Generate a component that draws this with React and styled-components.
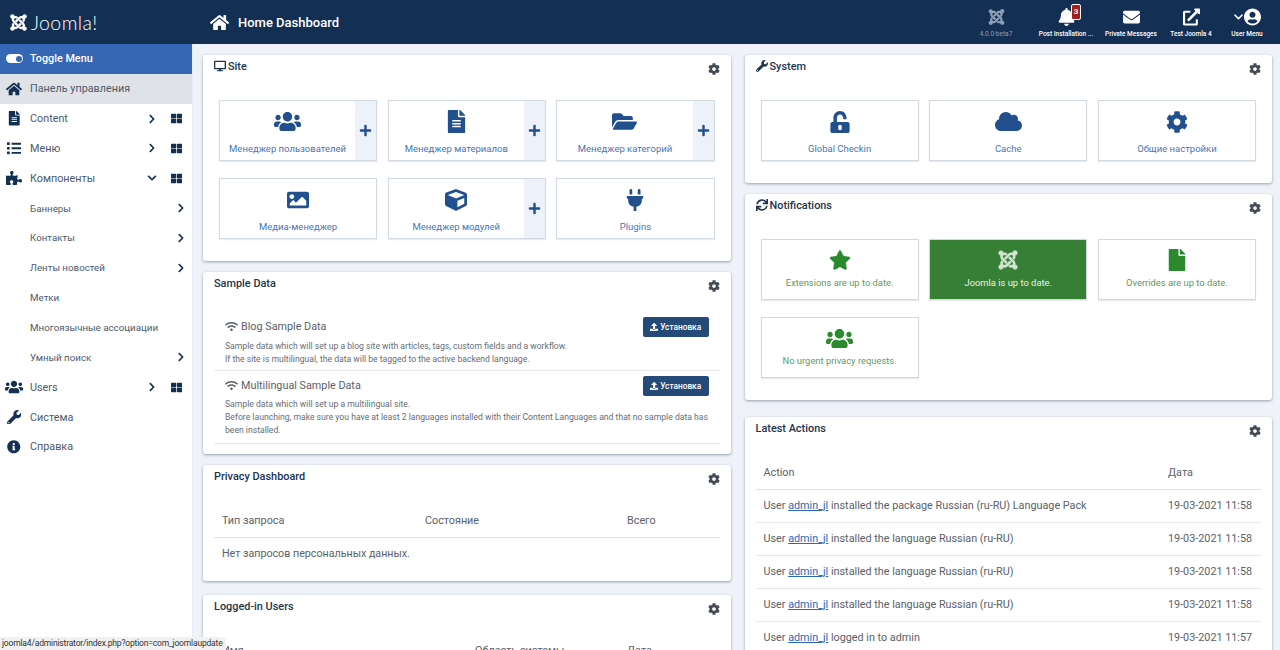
import styled, { createGlobalStyle } from "styled-components";
import {
  FaHome, FaFileAlt, FaList, FaPuzzlePiece, FaUsers, FaWrench, FaInfoCircle, FaChevronRight,
  FaChevronDown, FaThLarge, FaDesktop, FaCog, FaPlus, FaFolderOpen, FaImage, FaCube, FaPlug,
  FaUnlockAlt, FaCloud, FaStar, FaFile, FaSync, FaWifi, FaUpload, FaBell, FaEnvelope,
  FaExternalLinkAlt, FaUserCircle, FaJoomla,
} from "react-icons/fa";

const GlobalStyle = createGlobalStyle`
  html, body { margin: 0; height: 650px; overflow: hidden; }
  body { font-family: Roboto, "Liberation Sans", sans-serif; background: #eff3f9; color: #495057; }
  * { box-sizing: border-box; }
`;

const Page = styled.div`
  position: relative;
  height: 650px;
  overflow: hidden;
`;

const Header = styled.header`
  height: 44px;
  background: #132f53;
  color: #fff;
  display: flex;
  align-items: center;
`;
const Logo = styled.div`
  width: 192px;
  padding-left: 9px;
  display: flex;
  align-items: center;
  gap: 3px;
  font-family: Lato, sans-serif;
  font-weight: 300;
  font-size: 19.5px;
  letter-spacing: 0.4px;
  svg { font-size: 19px; }
`;
const PageTitle = styled.div`
  display: flex;
  align-items: center;
  gap: 9px;
  padding-left: 18px;
  font-size: 13px;
  font-weight: 500;
  svg { font-size: 19px; }
`;
const HeaderTools = styled.div`
  margin-left: auto;
  display: flex;
  align-items: flex-start;
  padding: 1px 11px 0 0;
`;
const Tool = styled.div`
  position: relative;
  width: ${(p) => p.$w}px;
  display: flex;
  flex-direction: column;
  align-items: center;
  gap: 4px;
  font-size: 6.5px;
  font-weight: ${(p) => (p.$dim ? 400 : 500)};
  white-space: nowrap;
  color: ${(p) => (p.$dim ? "#8d9eb5" : "#fff")};
  svg { font-size: 17px; height: 18px; }
`;
const Badge = styled.span`
  position: absolute;
  top: -4px;
  left: 50%;
  margin-left: 5px;
  width: 10px;
  height: 16px;
  background: #a51f18;
  border: 1px solid #fff;
  border-radius: 2px;
  font-size: 8px;
  font-weight: 700;
  line-height: 14px;
  text-align: center;
`;
const UserIcons = styled.div`
  display: flex;
  align-items: center;
  gap: 1px;
  svg:first-child { font-size: 9px; }
`;

const Body = styled.div`
  display: flex;
  height: 606px;
`;
const Sidebar = styled.nav`
  width: 193px;
  flex: none;
  background: #fff;
  border-right: 1px solid #e6ebf2;
`;
const MenuItem = styled.div`
  height: 29.85px;
  display: flex;
  align-items: center;
  padding-left: ${(p) => (p.$sub ? 30 : 6)}px;
  font-size: ${(p) => (p.$sub ? 9.75 : 10.8)}px;
  color: ${(p) => (p.$active ? "#fff" : "#4d5a6b")};
  background: ${(p) => (p.$active ? "#3567b5" : p.$current ? "#dfe3e7" : "transparent")};
  font-weight: ${(p) => (p.$active ? 500 : 400)};
`;
const MenuIcon = styled.span`
  width: 16px;
  margin-right: 8px;
  display: flex;
  justify-content: center;
  color: #132f53;
  font-size: ${(p) => p.$size ?? 14.5}px;
  svg { flex: none; }
`;
const Toggle = styled.span`
  width: 17px;
  height: 9px;
  margin: 0 7px 0 0;
  background: #fff;
  border-radius: 5px;
  display: flex;
  justify-content: flex-end;
  align-items: center;
  padding-right: 1.5px;
  &::after {
    content: "";
    width: 6px;
    height: 6px;
    border-radius: 50%;
    background: #3567b5;
  }
`;
const MenuText = styled.span`
  flex: 1;
  white-space: nowrap;
`;
const MenuArrow = styled.span`
  width: 12px;
  margin-right: ${(p) => (p.$sub ? 5 : 13)}px;
  display: flex;
  justify-content: center;
  color: #132f53;
  font-size: 10px;
`;
const MenuGrid = styled.span`
  width: 11px;
  margin-right: 10px;
  display: flex;
  color: #132f53;
  font-size: 11px;
`;

const Content = styled.main`
  flex: 1;
  display: flex;
  gap: 14px;
  padding: 11px 8px 0 10px;
  overflow: hidden;
`;
const Column = styled.div`
  flex: 1;
  min-width: 0;
  display: flex;
  flex-direction: column;
`;
const Card = styled.section`
  position: relative;
  flex: none;
  background: #fff;
  border-radius: 3px;
  box-shadow: 0 1px 3px rgba(40, 55, 80, 0.45);
  margin-bottom: ${(p) => p.$mb ?? 11}px;
  height: ${(p) => p.$h}px;
  padding: 0 16px;
`;
const CardHead = styled.h2`
  margin: 0 0 0 -5px;
  height: 45px;
  padding-top: 4px;
  display: flex;
  align-items: flex-start;
  gap: 2px;
  font-size: 10.9px;
  line-height: 15px;
  font-weight: 500;
  color: #22334d;
  svg { font-size: 12px; margin-top: 1px; }
`;
const CardGear = styled.span`
  position: absolute;
  top: 8px;
  right: 11px;
  font-size: 12px;
  color: #454c55;
  display: flex;
`;
const TileGrid = styled.div`
  display: grid;
  grid-template-columns: repeat(3, 1fr);
  gap: 17px 10.5px;
`;
const Tile = styled.div`
  height: 61px;
  display: flex;
  border: 1px solid #d3d9e2;
  box-shadow: 0 1px 1px rgba(210, 217, 227, 0.5);
  background: ${(p) => (p.$solid ? "#387f36" : "#fff")};
  color: ${(p) => (p.$solid ? "#e8f2e7" : p.$green ? "#619a60" : "#4a75b4")};
`;
const TileMain = styled.div`
  flex: 1;
  min-width: 0;
  display: flex;
  flex-direction: column;
  align-items: center;
  padding-top: 8px;
  font-size: ${(p) => (p.$green ? 9.4 : 9.5)}px;
  white-space: nowrap;
`;
const TileIcon = styled.span`
  height: ${(p) => (p.$tight ? 24 : 25)}px;
  margin-bottom: ${(p) => (p.$tight ? 5 : 9)}px;
  display: flex;
  align-items: center;
  font-size: ${(p) => p.$size ?? 22}px;
  color: ${(p) => (p.$solid ? "#cfe3ce" : p.$green ? "#2b8a2e" : "#22508f")};
`;
const TileAdd = styled.span`
  width: 21px;
  flex: none;
  background: #edf2fa;
  display: flex;
  align-items: center;
  justify-content: center;
  color: #22508f;
  font-size: 13px;
`;

const SampleList = styled.div`
  margin: -1px -5px 0;
`;
const SampleRow = styled.div`
  position: relative;
  padding: ${(p) => p.$pt}px 10px 0 11px;
  height: ${(p) => p.$h}px;
  border-bottom: 1px solid #e4e7ec;
`;
const SampleTitle = styled.div`
  display: flex;
  align-items: center;
  gap: 3px;
  font-size: 10.8px;
  line-height: 15px;
  color: #5a6169;
  margin-bottom: ${(p) => p.$mb}px;
  svg { font-size: 13px; }
`;
const SampleText = styled.p`
  margin: 0;
  font-size: 8.62px;
  line-height: 13px;
  color: #666d75;
`;
const InstallButton = styled.span`
  position: absolute;
  top: ${(p) => p.$top}px;
  right: 11px;
  width: 66px;
  height: 20px;
  background: #254a78;
  border-radius: 2px;
  color: #fff;
  display: flex;
  align-items: center;
  justify-content: center;
  gap: 2px;
  font-size: 8.3px;
  font-weight: 500;
`;

const DataTable = styled.table`
  width: calc(100% + 10px);
  margin: 0 -5px;
  border-collapse: collapse;
  font-size: 10.8px;
  color: #5a6169;
  table-layout: fixed;
  td { padding: 0 0 0 8px; white-space: nowrap; }
`;
const HeadRow = styled.tr`
  height: ${(p) => p.$h}px;
  border-bottom: ${(p) => (p.$line ? "1px solid #dee2e6" : "none")};
`;
const HeadCell = styled.th`
  width: ${(p) => (p.$w ? `${p.$w}px` : "auto")};
  padding: 0 0 6px 8px;
  font-weight: 400;
  text-align: left;
`;
const LogRow = styled.tr`
  height: 33px;
  border-bottom: 1px solid #e6e9ee;
`;
const NameLink = styled.a`
  color: #2a69b8;
  text-decoration: underline;
`;
const EmptyNote = styled.div`
  padding: 9px 3px;
  font-size: 10.7px;
  color: #5a6169;
`;

const StatusBar = styled.div`
  position: absolute;
  left: 0;
  bottom: 0;
  height: 13px;
  width: 226px;
  padding-left: 2px;
  background: #f1f1f1;
  border-top-right-radius: 3px;
  font-size: 8.5px;
  letter-spacing: -0.18px;
  line-height: 13px;
  color: #333;
  white-space: nowrap;
`;

const menu = [
  { icon: <FaFileAlt />, label: "Content", arrow: "right", grid: true },
  { icon: <FaList />, label: "Меню", arrow: "right", grid: true },
  { icon: <FaPuzzlePiece />, size: 16, label: "Компоненты", arrow: "down", grid: true },
  { sub: true, label: "Баннеры", arrow: "right" },
  { sub: true, label: "Контакты", arrow: "right" },
  { sub: true, label: "Ленты новостей", arrow: "right" },
  { sub: true, label: "Метки" },
  { sub: true, label: "Многоязычные ассоциации" },
  { sub: true, label: "Умный поиск", arrow: "right" },
  { icon: <FaUsers />, size: 18, label: "Users", arrow: "right", grid: true },
  { icon: <FaWrench />, label: "Система" },
  { icon: <FaInfoCircle />, size: 13.5, label: "Справка" },
];

const siteTiles = [
  { icon: <FaUsers />, size: 27, label: "Менеджер пользователей", add: true },
  { icon: <FaFileAlt />, size: 23, label: "Менеджер материалов", add: true },
  { icon: <FaFolderOpen />, size: 25, label: "Менеджер категорий", add: true },
  { icon: <FaImage />, label: "Медиа-менеджер" },
  { icon: <FaCube />, label: "Менеджер модулей", add: true },
  { icon: <FaPlug />, label: "Plugins" },
];

const systemTiles = [
  { icon: <FaUnlockAlt />, label: "Global Checkin" },
  { icon: <FaCloud />, size: 27, label: "Cache" },
  { icon: <FaCog />, label: "Общие настройки" },
];

const noticeTiles = [
  { icon: <FaStar />, label: "Extensions are up to date." },
  { icon: <FaJoomla />, label: "Joomla is up to date.", solid: true },
  { icon: <FaFile />, label: "Overrides are up to date." },
  { icon: <FaUsers />, size: 27, label: "No urgent privacy requests." },
];

const logRows = [
  { text: "installed the package Russian (ru-RU) Language Pack", date: "19-03-2021 11:58" },
  { text: "installed the language Russian (ru-RU)", date: "19-03-2021 11:58" },
  { text: "installed the language Russian (ru-RU)", date: "19-03-2021 11:58" },
  { text: "installed the language Russian (ru-RU)", date: "19-03-2021 11:58" },
  { text: "logged in to admin", date: "19-03-2021 11:57" },
];

const Gear = () => (
  <CardGear>
    <FaCog />
  </CardGear>
);

const Tiles = ({ items, green }) => (
  <TileGrid>
    {items.map((t) => (
      <Tile key={t.label} $green={green} $solid={t.solid}>
        <TileMain $green={green}>
          <TileIcon $green={green} $solid={t.solid} $tight={green} $size={t.size}>
            {t.icon}
          </TileIcon>
          {t.label}
        </TileMain>
        {t.add && (
          <TileAdd>
            <FaPlus />
          </TileAdd>
        )}
      </Tile>
    ))}
  </TileGrid>
);

const App = () => {
  return (
    <Page>
      <GlobalStyle />
      <Header>
        <Logo>
          <FaJoomla />
          Joomla!
        </Logo>
        <PageTitle>
          <FaHome />
          Home Dashboard
        </PageTitle>
        <HeaderTools>
          <Tool $w={62} $dim>
            <FaJoomla />
            4.0.0-beta7
          </Tool>
          <Tool $w={78}>
            <FaBell />
            <Badge>3</Badge>
            Post Installation ...
          </Tool>
          <Tool $w={52}>
            <FaEnvelope />
            Private Messages
          </Tool>
          <Tool $w={68}>
            <FaExternalLinkAlt />
            Test Joomla 4
          </Tool>
          <Tool $w={44}>
            <UserIcons>
              <FaChevronDown />
              <FaUserCircle />
            </UserIcons>
            User Menu
          </Tool>
        </HeaderTools>
      </Header>
      <Body>
        <Sidebar>
          <MenuItem $active>
            <Toggle />
            Toggle Menu
          </MenuItem>
          <MenuItem $current>
            <MenuIcon $size={16}>
              <FaHome />
            </MenuIcon>
            Панель управления
          </MenuItem>
          {menu.map((m) => (
            <MenuItem key={m.label} $sub={m.sub}>
              {m.icon && <MenuIcon $size={m.size}>{m.icon}</MenuIcon>}
              <MenuText>{m.label}</MenuText>
              {m.arrow && (
                <MenuArrow $sub={m.sub}>
                  {m.arrow === "down" ? <FaChevronDown /> : <FaChevronRight />}
                </MenuArrow>
              )}
              {m.grid && (
                <MenuGrid>
                  <FaThLarge />
                </MenuGrid>
              )}
            </MenuItem>
          ))}
        </Sidebar>
        <Content>
          <Column>
            <Card $h={206}>
              <CardHead>
                <FaDesktop /> Site
              </CardHead>
              <Gear />
              <Tiles items={siteTiles} />
            </Card>
            <Card $h={182}>
              <CardHead>Sample Data</CardHead>
              <Gear />
              <SampleList>
                <SampleRow $pt={3} $h={55}>
                  <SampleTitle $mb={6}>
                    <FaWifi /> Blog Sample Data
                  </SampleTitle>
                  <SampleText>
                    Sample data which will set up a blog site with articles, tags, custom fields and a workflow.
                    <br />
                    If the site is multilingual, the data will be tagged to the active backend language.
                  </SampleText>
                  <InstallButton $top={1}>
                    <FaUpload /> Установка
                  </InstallButton>
                </SampleRow>
                <SampleRow $pt={7} $h={73}>
                  <SampleTitle $mb={5}>
                    <FaWifi /> Multilingual Sample Data
                  </SampleTitle>
                  <SampleText>
                    Sample data which will set up a multilingual site.
                    <br />
                    Before launching, make sure you have at least 2 languages installed with their Content Languages and that no sample data has been installed.
                  </SampleText>
                  <InstallButton $top={5}>
                    <FaUpload /> Установка
                  </InstallButton>
                </SampleRow>
              </SampleList>
            </Card>
            <Card $h={116} $mb={14}>
              <CardHead>Privacy Dashboard</CardHead>
              <Gear />
              <DataTable>
                <thead>
                  <HeadRow $h={27} $line>
                    <HeadCell $w={203}>Тип запроса</HeadCell>
                    <HeadCell $w={202}>Состояние</HeadCell>
                    <HeadCell>Всего</HeadCell>
                  </HeadRow>
                </thead>
              </DataTable>
              <EmptyNote>Нет запросов персональных данных.</EmptyNote>
            </Card>
            <Card $h={120} $mb={0}>
              <CardHead>Logged-in Users</CardHead>
              <Gear />
              <DataTable>
                <thead>
                  <HeadRow $h={26}>
                    <HeadCell $w={253}>Имя</HeadCell>
                    <HeadCell $w={152}>Область системы</HeadCell>
                    <HeadCell>Дата</HeadCell>
                  </HeadRow>
                </thead>
              </DataTable>
            </Card>
          </Column>
          <Column>
            <Card $h={128}>
              <CardHead>
                <FaWrench /> System
              </CardHead>
              <Gear />
              <Tiles items={systemTiles} />
            </Card>
            <Card $h={206} $mb={17}>
              <CardHead>
                <FaSync /> Notifications
              </CardHead>
              <Gear />
              <Tiles items={noticeTiles} green />
            </Card>
            <Card $h={260} $mb={0}>
              <CardHead>Latest Actions</CardHead>
              <Gear />
              <DataTable>
                <thead>
                  <HeadRow $h={27} $line>
                    <HeadCell>Action</HeadCell>
                    <HeadCell $w={101}>Дата</HeadCell>
                  </HeadRow>
                </thead>
                <tbody>
                  {logRows.map((r, i) => (
                    <LogRow key={i}>
                      <td>
                        User <NameLink>admin_jl</NameLink> {r.text}
                      </td>
                      <td>{r.date}</td>
                    </LogRow>
                  ))}
                </tbody>
              </DataTable>
            </Card>
          </Column>
        </Content>
      </Body>
      <StatusBar>joomla4/administrator/index.php?option=com_joomlaupdate</StatusBar>
    </Page>
  );
};

export default App;
